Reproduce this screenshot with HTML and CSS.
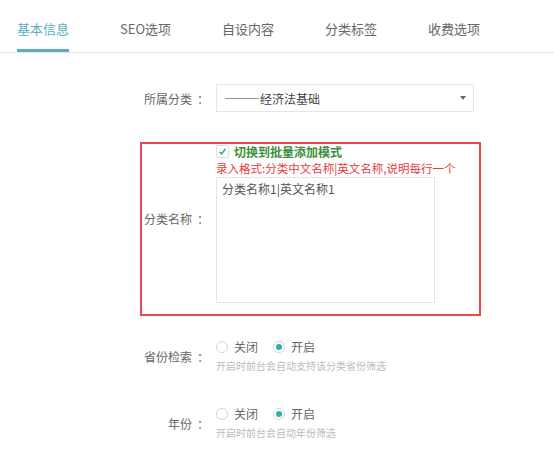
FILE: index.html
```html
<!DOCTYPE html>
<html lang="zh-CN">

<head>
    <meta charset="UTF-8">
    <meta name="viewport" content="width=device-width, initial-scale=1.0">
    <title>分类设置</title>
    <link rel="stylesheet" href="styles.css">
</head>

<body>
    <!-- 頁籤 -->
    <nav class="tabs">
        <a class="tab active">基本信息</a>
        <a class="tab">SEO选项</a>
        <a class="tab">自设内容</a>
        <a class="tab">分类标签</a>
        <a class="tab">收费选项</a>
    </nav>

    <section class="form">
        <div class="row">
            <label class="label">所属分类<span class="colon">：</span></label>
            <div class="select">
                <span>———经济法基础</span>
                <i class="arrow"></i>
            </div>
        </div>

        <!-- 紅框標示的區塊 -->
        <div class="row mark">
            <label class="label name">分类名称<span class="colon">：</span></label>
            <div class="field">
                <div class="check">
                    <span class="box">
                        <svg width="9" height="9" viewBox="0 0 9 9">
                            <path d="M1.5 4.8 L3.6 6.8 L7.6 1.8" fill="none" stroke="#2bb3a3" stroke-width="1.6" />
                        </svg>
                    </span>
                    <b>切换到批量添加模式</b>
                </div>
                <p class="tip">录入格式:分类中文名称|英文名称,说明每行一个</p>
                <div class="textarea">分类名称1|英文名称1</div>
            </div>
        </div>

        <div class="row radio-row">
            <label class="label">省份检索<span class="colon">：</span></label>
            <div class="field">
                <div class="radios">
                    <span class="radio"><i class="dot"></i>关闭</span>
                    <span class="radio on"><i class="dot"></i>开启</span>
                </div>
                <p class="hint">开启时前台会自动支持该分类省份筛选</p>
            </div>
        </div>

        <div class="row radio-row year">
            <label class="label">年份<span class="colon">：</span></label>
            <div class="field">
                <div class="radios">
                    <span class="radio"><i class="dot"></i>关闭</span>
                    <span class="radio on"><i class="dot"></i>开启</span>
                </div>
                <p class="hint">开启时前台会自动年份筛选</p>
            </div>
        </div>
    </section>
</body>

</html>
```

FILE: styles.css
```css
html,
body {
    margin: 0;
    padding: 0;
}

body {
    background-color: #fff;
    font-family: "Noto Sans CJK SC", sans-serif;
    font-size: 12px;
    color: #666;
}

p {
    margin: 0;
}

.tabs {
    display: flex;
    gap: 51px;
    padding-left: 17px;
    border-bottom: 1px solid #e6e6e6;
}

.tab {
    font-size: 13px;
    line-height: 18px;
    padding: 20px 0 11px;
    border-bottom: 3px solid transparent;
    color: #666;
    white-space: nowrap;
}

.tab.active {
    color: #5aaec0;
    border-bottom-color: #5aaec0;
}

.form {
    margin-left: 140px;
    width: 341px;
}

.row {
    display: flex;
    align-items: center;
    border: 2px solid transparent;
    margin-top: 29px;
}

.label {
    width: 64px;
    flex-shrink: 0;
    text-align: right;
    white-space: nowrap;
    margin-right: 10px;
    color: #666;
}

/* 冒號與文字間留空 */
.colon {
    margin-left: 5px;
    margin-right: -3px;
}

.select {
    width: 258px;
    height: 28px;
    box-sizing: border-box;
    border: 1px solid #e6e6e6;
    display: flex;
    align-items: center;
    justify-content: space-between;
    padding: 0 7px 0 7px;
    color: #444;
}

.arrow {
    border-left: 3px solid transparent;
    border-right: 3px solid transparent;
    border-top: 4px solid #666;
}

.mark {
    border-color: #e8484b;
    margin-top: 28px;
    padding-bottom: 11px;
}

.mark .name {
    padding-bottom: 10px;
}

.check {
    display: flex;
    align-items: center;
    height: 14px;
    gap: 5px;
}

.check .box {
    width: 13px;
    height: 13px;
    box-sizing: border-box;
    border: 1px solid #ddd;
    border-radius: 2px;
    display: flex;
    align-items: center;
    justify-content: center;
}

.check b {
    color: #3b8e3b;
    font-size: 12px;
}

.tip {
    color: #e53b3b;
    font-size: 11.5px;
    line-height: 18px;
    margin-top: 1px;
}

.textarea {
    width: 219px;
    height: 126px;
    box-sizing: border-box;
    border: 1px solid #e3e3e3;
    padding: 2px 5px;
    color: #555;
}

.radio-row {
    margin-top: 20px;
}

.radio-row.year {
    margin-top: 27px;
}

.radios {
    display: flex;
    gap: 15px;
    line-height: 18px;
}

.radio {
    display: flex;
    align-items: center;
    gap: 6px;
    color: #666;
}

.dot {
    width: 12px;
    height: 12px;
    box-sizing: border-box;
    border: 1px solid #d5d5d5;
    border-radius: 50%;
    display: flex;
    align-items: center;
    justify-content: center;
}

.radio.on .dot:after {
    content: '';
    width: 6px;
    height: 6px;
    border-radius: 50%;
    background-color: #2bb3a3;
}

.hint {
    font-size: 10px;
    line-height: 16px;
    margin-top: 2px;
    color: #bbb;
}
```
